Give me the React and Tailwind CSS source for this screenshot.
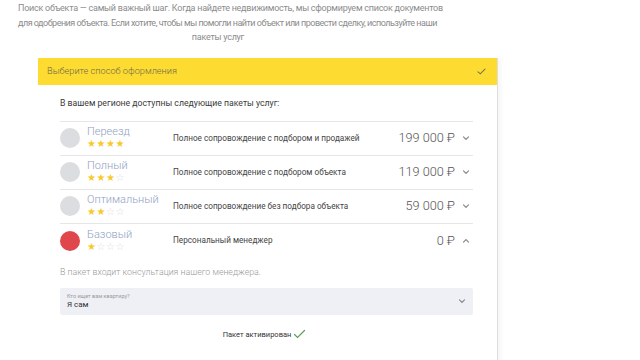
import React from "react";

const Chevron = ({ up = false }) => (
  <svg width="8" height="6" viewBox="0 0 8 6" className={up ? "rotate-180" : ""}>
    <path d="M1.5 1.8 L4 4.3 L6.5 1.8" fill="none" stroke="#8a8a8a" strokeWidth="1.2" strokeLinecap="round" />
  </svg>
);

const Stars = ({ n }) => (
  <div className="flex gap-[0.5px] text-[10px] leading-[10px]" style={{ fontFamily: "DejaVu Sans, sans-serif" }}>
    {[0, 1, 2, 3].map((i) =>
      i < n ? (
        <span key={i} className="text-[#f7c928]">★</span>
      ) : (
        <span key={i} className="text-[#dcdcdc]">☆</span>
      )
    )}
  </div>
);

const rows = [
  { name: "Переезд", stars: 4, desc: "Полное сопровождение с подбором и продажей", price: "199 000 ₽" },
  { name: "Полный", stars: 3, desc: "Полное сопровождение с подбором объекта", price: "119 000 ₽" },
  { name: "Оптимальный", stars: 2, desc: "Полное сопровождение без подбора объекта", price: "59 000 ₽" },
  { name: "Базовый", stars: 1, desc: "Персональный менеджер", price: "0 ₽", active: true },
];

export default function App() {
  return (
    <div className="w-[640px] h-[360px] overflow-hidden bg-white" style={{ fontFamily: "Roboto, 'Liberation Sans', sans-serif" }}>
      <p className="ml-[18px] w-[400px] pt-[1px] text-center text-[9px] tracking-[-0.25px] leading-[14.5px] text-[#8c8c8c] whitespace-nowrap">
        Поиск объекта — самый важный шаг. Когда найдете недвижимость, мы сформируем список документов
        <br />
        <span className="tracking-[-0.5px]">
          для одобрения объекта. Если хотите, чтобы мы помогли найти объект или провести сделку, используйте наши
        </span>
        <br />
        пакеты услуг
      </p>
      <div className="ml-[38px] mt-[13px] w-[460px] h-[400px] border-r border-[#dedede] shadow-[3px_0_4px_rgba(0,0,0,0.04)]">
        <div className="h-[27px] bg-[#fddb31] flex items-center justify-between pl-[9px] pr-[11px]">
          <span className="text-[9.2px] text-[#6e6a4a] font-light">Выберите способ оформления</span>
          <svg width="9" height="7" viewBox="0 0 9 7">
            <path d="M1 3.8 L3.3 5.8 L8 1.2" fill="none" stroke="#7a7550" strokeWidth="1.1" strokeLinecap="round" />
          </svg>
        </div>
        <div className="pl-[22px] pr-[24px] pt-[11px]">
          <div className="text-[8.7px] leading-[14px] text-[#3a3a3a]">В вашем регионе доступны следующие пакеты услуг:</div>
          <div className="mt-[11px] border-t border-[#e6e6e6]">
            {rows.map((r, idx) => (
              <div
                key={r.name}
                className={`h-[34px] flex items-center ${idx < 3 ? "border-b border-[#e6e6e6]" : ""}`}
              >
                <div className={`w-[20px] h-[20px] rounded-full shrink-0 ${r.active ? "bg-[#e0474c]" : "bg-[#dcdde0]"}`} />
                <div className="ml-[7px] w-[86px] flex flex-col -mt-[2px]">
                  <span className="text-[11px] leading-[14px] text-[#8ea2c0] font-light whitespace-nowrap">{r.name}</span>
                  <Stars n={r.stars} />
                </div>
                <div className="flex-1 text-[8.2px] text-[#444]">{r.desc}</div>
                <div className="text-[12.7px] text-[#555] font-light">{r.price}</div>
                <div className="w-[18px] flex justify-end pr-[3px]">
                  <Chevron up={r.active} />
                </div>
              </div>
            ))}
          </div>
          <div className="mt-[7px] text-[8.8px] leading-[14px] text-[#9a9a9a] font-light">
            В пакет входит консультация нашего менеджера.
          </div>
          <div className="mt-[9px] h-[27px] bg-[#eef0f5] rounded-[2px] flex items-center justify-between pl-[7px] pr-[7px]">
            <div className="flex flex-col">
              <span className="text-[5.5px] leading-[7px] text-[#9a9a9a]">Кто ищет вам квартиру?</span>
              <span className="text-[8px] leading-[10px] text-[#333]">Я сам</span>
            </div>
            <Chevron />
          </div>
          <div className="mt-[14px] flex items-center justify-center gap-[2px] pr-[4px]">
            <span className="text-[7.5px] text-[#333]">Пакет активирован</span>
            <svg width="13" height="10" viewBox="0 0 13 10">
              <path d="M1.5 5.5 L4.5 8.5 L11.5 1.5" fill="none" stroke="#5aa05a" strokeWidth="1.2" strokeLinecap="round" />
            </svg>
          </div>
        </div>
      </div>
    </div>
  );
}
